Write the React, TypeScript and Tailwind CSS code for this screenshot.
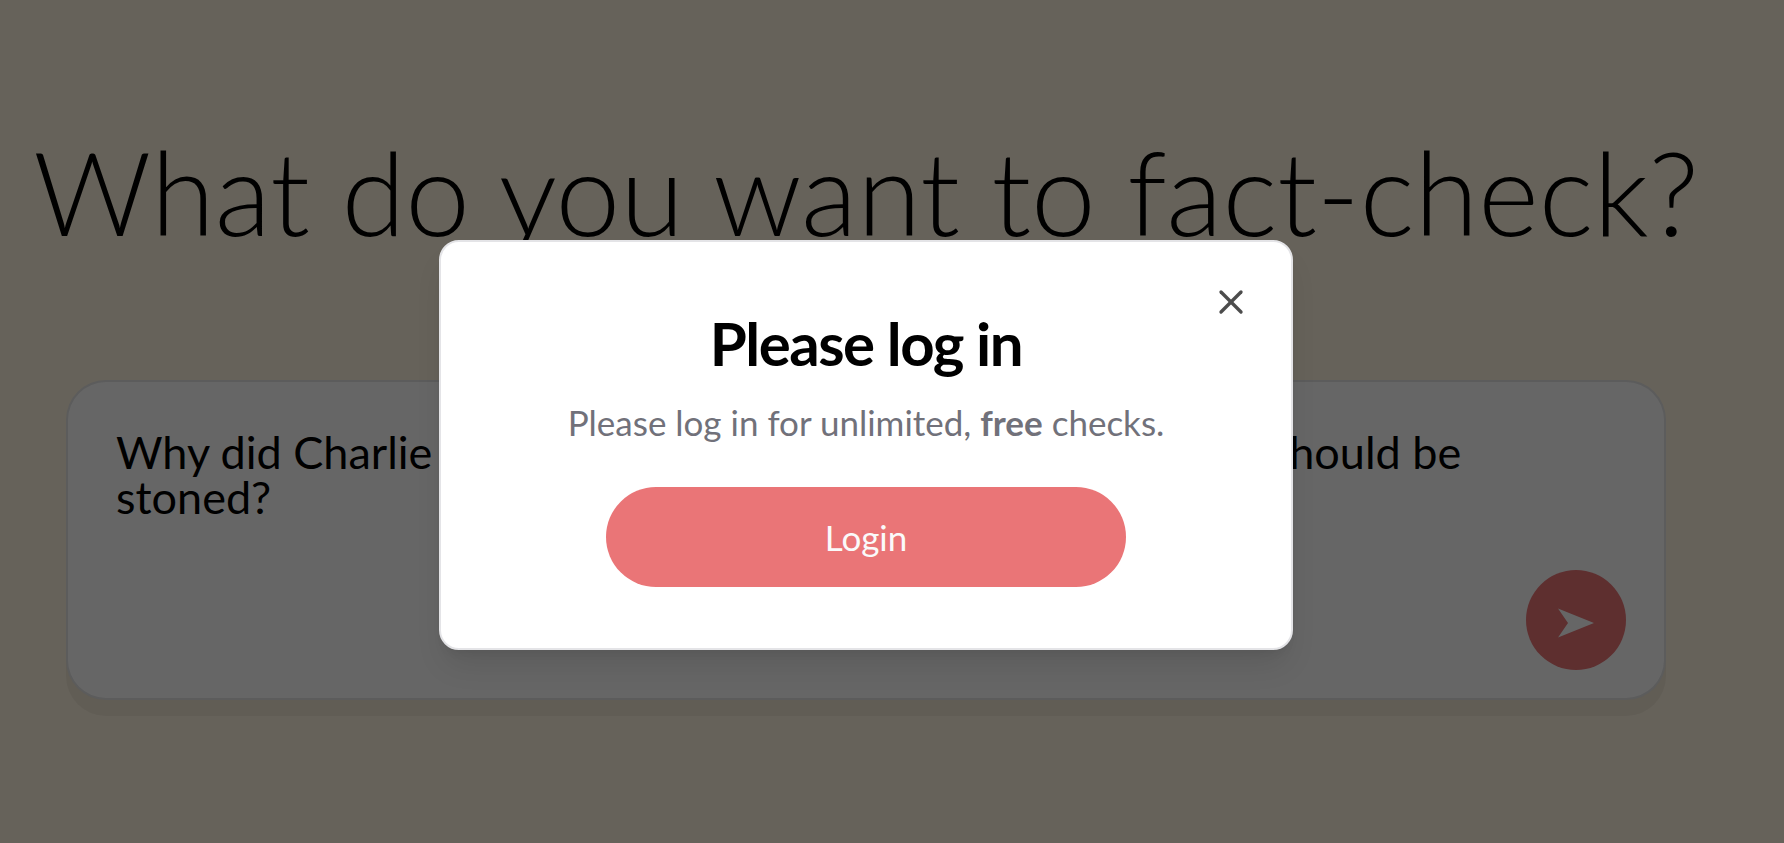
import { X } from "lucide-react";
import { useState } from "react";

function SendIcon() {
  return (
    <svg viewBox="0 0 100 100" className="size-full" aria-hidden="true">
      <path d="M32 38.5 L68 53 L32 67.5 L42 53 Z" fill="currentColor" />
    </svg>
  );
}

function CheckForm() {
  const [query, setQuery] = useState(
    "Why did Charlie say that stained glass windows in a house should be stoned?",
  );
  return (
    <form
      onSubmit={(e) => e.preventDefault()}
      className="mt-31 flex h-80 w-full max-w-[1600px] rounded-[40px] border-2 border-black/10 bg-white bg-clip-border py-7 pr-[38px] pl-12 shadow-[0_16px_0_0_rgb(0_0_0/0.05)]"
    >
      <textarea
        aria-label="Claim to check"
        value={query}
        onChange={(e) => setQuery(e.target.value)}
        className="mt-5 min-w-0 flex-1 resize-none overflow-hidden bg-transparent text-[45px] leading-[45px] text-black outline-none"
      />
      <button
        type="submit"
        aria-label="Send"
        className="size-[100px] shrink-0 self-end rounded-full bg-[#ea7577] text-white"
      >
        <SendIcon />
      </button>
    </form>
  );
}

function LoginDialog() {
  return (
    <div className="absolute inset-0 flex items-start justify-center bg-black/60 pt-60 pr-[52px]">
      <div
        role="dialog"
        aria-modal="true"
        aria-labelledby="login-title"
        className="relative flex w-full max-w-[854px] flex-col items-center rounded-[20px] border-2 border-[#e4e4e7] bg-white px-12 pt-[71px] pb-[61px] shadow-[0_20px_30px_-6px_rgb(0_0_0/0.1),0_8px_12px_-8px_rgb(0_0_0/0.1)]"
      >
        <button type="button" aria-label="Close" className="absolute top-10 right-10 text-[#4c4c4c]">
          <X size={40} strokeWidth={2} />
        </button>
        <h2 id="login-title" className="text-6xl leading-[60px] font-bold tracking-tight text-black">
          Please log in
        </h2>
        <p className="mt-6 text-[35px] leading-[50px] text-[#71717a]">
          Please log in for unlimited, <strong className="font-bold">free</strong> checks.
        </p>
        <button
          type="button"
          className="mt-10 h-[100px] w-full max-w-[520px] rounded-full bg-[#ea7577] text-[35px] text-[#fafafa]"
        >
          Login
        </button>
      </div>
    </div>
  );
}

export default function App() {
  return (
    <div className="relative min-h-screen overflow-hidden bg-[#fff5e1] font-['Lato',sans-serif]">
      <main className="flex flex-col items-center pt-32 pr-[52px]">
        <h1 className="text-center text-[116px] leading-[128px] font-light whitespace-nowrap text-black">
          What do you want to fact-check?
        </h1>
        <CheckForm />
      </main>
      <LoginDialog />
    </div>
  );
}
